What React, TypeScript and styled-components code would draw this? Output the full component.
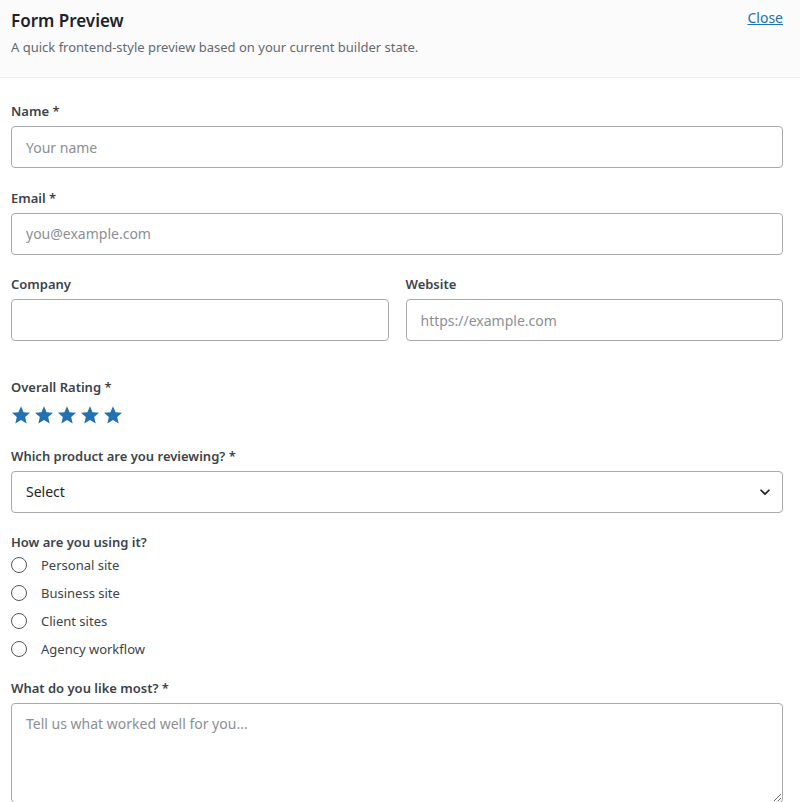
import React, {FC} from "react";
import styled, {createGlobalStyle} from "styled-components";

const GlobalStyle = createGlobalStyle`
  html, body {
    margin: 0;
    padding: 0;
    background: #ffffff;
  }
  body {
    font-family: "Noto Sans", "Open Sans", sans-serif;
    color: #1d2327;
    overflow: hidden;
  }
`

const Star: FC = () => (
    <svg width="20" height="20" viewBox="0 0 24 24" aria-hidden="true">
        <path fill="#2271b1" d="M12 1.6l3.1 7.1 7.7.7-5.8 5.1 1.8 7.6L12 18.1l-6.8 4 1.8-7.6-5.8-5.1 7.7-.7z"/>
    </svg>
);

const Chevron: FC = () => (
    <svg width="14" height="14" viewBox="0 0 16 16" aria-hidden="true">
        <path d="M3.5 6l4.5 4.5L12.5 6" fill="none" stroke="#1d2327" strokeWidth="2" strokeLinecap="round" strokeLinejoin="round"/>
    </svg>
);

const usage = ["Personal site", "Business site", "Client sites", "Agency workflow"];

export default function App() {
    return <Page>
        <GlobalStyle/>
        <Header>
            <HeaderText>
                <Title>Form Preview</Title>
                <Subtitle>A quick frontend-style preview based on your current builder state.</Subtitle>
            </HeaderText>
            <CloseLink href="#">Close</CloseLink>
        </Header>
        <Body>
            <Field>
                <Label>Name *</Label>
                <TextInput placeholder="Your name"/>
            </Field>
            <Field>
                <Label>Email *</Label>
                <TextInput placeholder="you@example.com"/>
            </Field>
            <TwoCol>
                <Field>
                    <Label>Company</Label>
                    <TextInput/>
                </Field>
                <Field>
                    <Label>Website</Label>
                    <TextInput placeholder="https://example.com"/>
                </Field>
            </TwoCol>
            <Field $gap={9} $bottom={22}>
                <Label>Overall Rating *</Label>
                <Stars>
                    {[0, 1, 2, 3, 4].map(i => <Star key={i}/>)}
                </Stars>
            </Field>
            <Field>
                <Label>Which product are you reviewing? *</Label>
                <SelectBox>
                    <span>Select</span>
                    <Chevron/>
                </SelectBox>
            </Field>
            <Field $gap={0} $bottom={16}>
                <Label>How are you using it?</Label>
                {usage.map(u => <RadioRow key={u}>
                    <RadioCircle/>
                    <RadioText>{u}</RadioText>
                </RadioRow>)}
            </Field>
            <Field>
                <Label>What do you like most? *</Label>
                <TextArea placeholder="Tell us what worked well for you..."/>
            </Field>
        </Body>
    </Page>
}

const Page = styled.div`
  width: 800px;
  height: 802px;
  overflow: hidden;
`

const Header = styled.div`
  height: 78px;
  box-sizing: border-box;
  background: #fbfbfc;
  border-bottom: 1px solid #eeeff0;
  padding: 9px 17px 0 11px;
  display: flex;
  justify-content: space-between;
  align-items: flex-start;
`

const HeaderText = styled.div`
  display: flex;
  flex-direction: column;
`

const Title = styled.h2`
  margin: 0;
  font-size: 17px;
  line-height: 24px;
  font-weight: 600;
  color: #1d2327;
`

const Subtitle = styled.p`
  margin: 5px 0 0;
  font-size: 13px;
  line-height: 18px;
  color: #646970;
`

const CloseLink = styled.a`
  font-size: 14px;
  line-height: 20px;
  color: #2271b1;
  text-decoration: underline;
  margin-top: -1px;
`

const Body = styled.div`
  padding: 24px 17px 0 11px;
`

const Field = styled.div<{ $gap?: number; $bottom?: number }>`
  display: flex;
  flex-direction: column;
  margin-bottom: ${p => p.$bottom ?? 20.5}px;
  & > label {
    margin-bottom: ${p => p.$gap ?? 6}px;
  }
`

const TwoCol = styled.div`
  display: grid;
  grid-template-columns: 1fr 1fr;
  column-gap: 17px;
  margin-bottom: 16px;
`

const Label = styled.label`
  font-size: 13px;
  line-height: 18px;
  font-weight: 600;
  color: #3c434a;
`

const inputBase = `
  box-sizing: border-box;
  width: 100%;
  border: 1px solid #a7aaad;
  border-radius: 4px;
  background: #fff;
  font-family: "Noto Sans", "Open Sans", sans-serif;
  font-size: 14px;
  color: #1d2327;
  padding: 0 14px;
  outline: none;
  &::placeholder {
    color: #8c8f94;
  }
`

const TextInput = styled.input`
  ${inputBase}
  height: 42px;
`

const TextArea = styled.textarea`
  ${inputBase}
  height: 100px;
  padding: 10px 14px;
  resize: vertical;
  line-height: 20px;
`

const SelectBox = styled.div`
  ${inputBase}
  height: 42px;
  display: flex;
  align-items: center;
  justify-content: space-between;
  padding: 0 10px 0 14px;
`

const Stars = styled.div`
  display: flex;
  gap: 3px;
  height: 20px;
`

const RadioRow = styled.div`
  display: flex;
  align-items: center;
  height: 28px;
`

const RadioCircle = styled.span`
  width: 16px;
  height: 16px;
  box-sizing: border-box;
  border: 1.5px solid #50575e;
  border-radius: 50%;
  margin-right: 14px;
`

const RadioText = styled.span`
  font-size: 13px;
  color: #3c434a;
`
